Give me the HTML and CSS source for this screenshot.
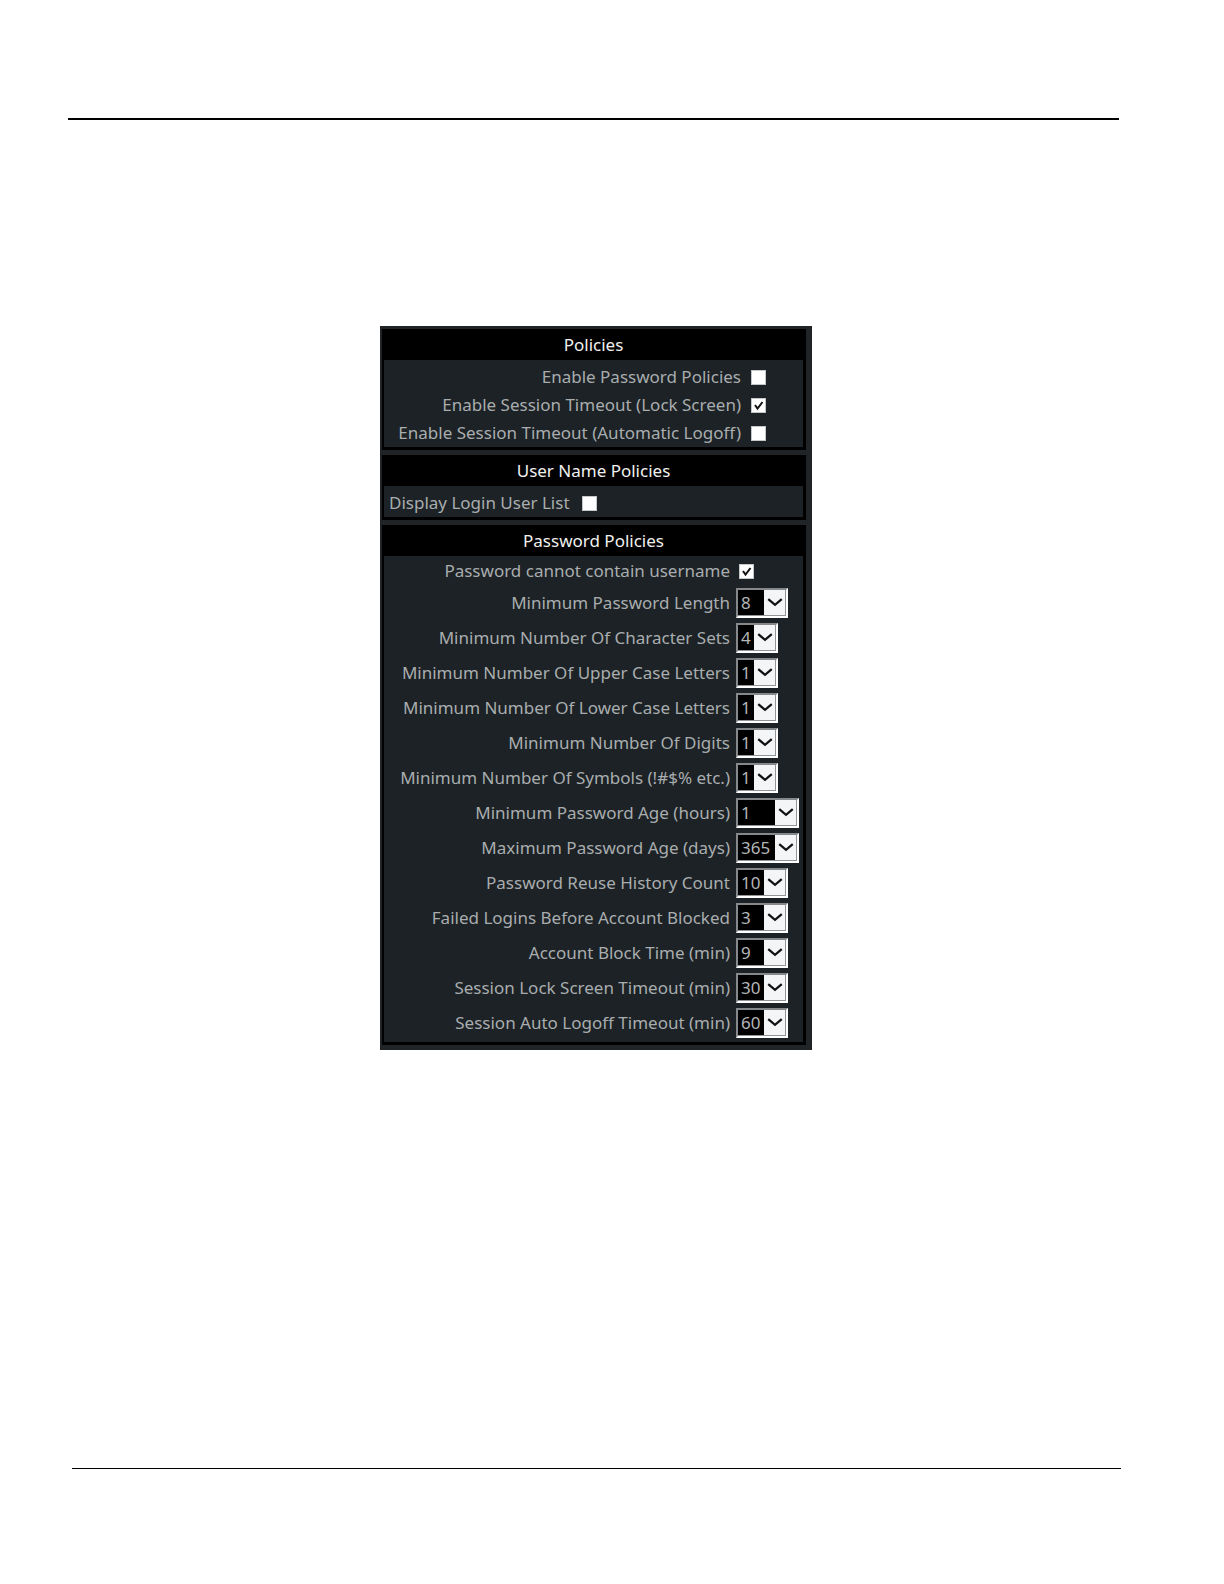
FILE: index.html
```
<!DOCTYPE html>
<html lang="en">
<head>
<meta charset="utf-8">
<title>Policies</title>
<link rel="stylesheet" href="styles.css">
</head>
<body>
<header class="page-header"></header>
<main class="page-main">
<form class="panel">
  <section class="group">
    <h2 class="group-title">Policies</h2>
    <div class="group-body session">
      <div class="row"><label for="pp">Enable Password Policies</label><input class="check" type="checkbox" id="pp"></div>
      <div class="row"><label for="ls">Enable Session Timeout (Lock Screen)</label><input class="check" type="checkbox" id="ls" checked></div>
      <div class="row"><label for="al">Enable Session Timeout (Automatic Logoff)</label><input class="check" type="checkbox" id="al"></div>
    </div>
  </section>
  <section class="group">
    <h2 class="group-title">User Name Policies</h2>
    <div class="group-body users">
      <div class="row"><label for="ul">Display Login User List</label><input class="check" type="checkbox" id="ul"></div>
    </div>
  </section>
  <section class="group">
    <h2 class="group-title">Password Policies</h2>
    <div class="group-body password">
      <div class="row"><label for="cu">Password cannot contain username</label><input class="check" type="checkbox" id="cu" checked></div>
      <div class="row tall"><label for="s1">Minimum Password Length</label><span class="drop medium"><select id="s1"><option>8</option></select><svg viewBox="0 0 14 8"><path d="M1 1l6 5 6-5"/></svg></span></div>
      <div class="row tall"><label for="s2">Minimum Number Of Character Sets</label><span class="drop"><select id="s2"><option>4</option></select><svg viewBox="0 0 14 8"><path d="M1 1l6 5 6-5"/></svg></span></div>
      <div class="row tall"><label for="s3">Minimum Number Of Upper Case Letters</label><span class="drop"><select id="s3"><option>1</option></select><svg viewBox="0 0 14 8"><path d="M1 1l6 5 6-5"/></svg></span></div>
      <div class="row tall"><label for="s4">Minimum Number Of Lower Case Letters</label><span class="drop"><select id="s4"><option>1</option></select><svg viewBox="0 0 14 8"><path d="M1 1l6 5 6-5"/></svg></span></div>
      <div class="row tall"><label for="s5">Minimum Number Of Digits</label><span class="drop"><select id="s5"><option>1</option></select><svg viewBox="0 0 14 8"><path d="M1 1l6 5 6-5"/></svg></span></div>
      <div class="row tall"><label for="s6">Minimum Number Of Symbols (!#$% etc.)</label><span class="drop"><select id="s6"><option>1</option></select><svg viewBox="0 0 14 8"><path d="M1 1l6 5 6-5"/></svg></span></div>
      <div class="row tall"><label for="s7">Minimum Password Age (hours)</label><span class="drop wide"><select id="s7"><option>1</option></select><svg viewBox="0 0 14 8"><path d="M1 1l6 5 6-5"/></svg></span></div>
      <div class="row tall"><label for="s8">Maximum Password Age (days)</label><span class="drop wide"><select id="s8"><option>365</option></select><svg viewBox="0 0 14 8"><path d="M1 1l6 5 6-5"/></svg></span></div>
      <div class="row tall"><label for="s9">Password Reuse History Count</label><span class="drop medium"><select id="s9"><option>10</option></select><svg viewBox="0 0 14 8"><path d="M1 1l6 5 6-5"/></svg></span></div>
      <div class="row tall"><label for="s10">Failed Logins Before Account Blocked</label><span class="drop medium"><select id="s10"><option>3</option></select><svg viewBox="0 0 14 8"><path d="M1 1l6 5 6-5"/></svg></span></div>
      <div class="row tall"><label for="s11">Account Block Time (min)</label><span class="drop medium"><select id="s11"><option>9</option></select><svg viewBox="0 0 14 8"><path d="M1 1l6 5 6-5"/></svg></span></div>
      <div class="row tall"><label for="s12">Session Lock Screen Timeout (min)</label><span class="drop medium"><select id="s12"><option>30</option></select><svg viewBox="0 0 14 8"><path d="M1 1l6 5 6-5"/></svg></span></div>
      <div class="row tall"><label for="s13">Session Auto Logoff Timeout (min)</label><span class="drop medium"><select id="s13"><option>60</option></select><svg viewBox="0 0 14 8"><path d="M1 1l6 5 6-5"/></svg></span></div>
    </div>
  </section>
</form>
</main>
<footer class="page-footer"></footer>
</body>
</html>
```
FILE: styles.css
```
* { box-sizing: border-box; }

body {
  margin: 0;
  min-height: 100vh;
  display: flex;
  flex-direction: column;
  background: #fff;
  color: #a9adaf;
  font: 17px/24px "Noto Sans", sans-serif;
}

.page-header {
  margin: 118px 105px 0 68px;
  border-top: 2px solid #000;
}

.page-main {
  flex: 1;
  padding: 206px 104px 60px 72px;
}

.page-footer {
  margin: 0 103px 115px 72px;
  border-top: 1px solid #000;
}

.panel {
  max-width: 432px;
  margin: 0 auto;
  padding: 3px 6px 5px 2px;
  display: flex;
  flex-direction: column;
  gap: 5px;
  background: #202426;
}

.group {
  border: 3px solid #000;
  border-left-width: 2px;
  background: #1c2225;
}

.group-title {
  margin: 0;
  height: 28px;
  background: #000;
  color: #f0f0ee;
  font-size: 17px;
  font-weight: 400;
  line-height: 26px;
  text-align: center;
}

.group-body { padding: 3px 0 0 5px; }
.group-body.password { padding: 1px 0 2px 5px; }

.row {
  display: grid;
  align-items: center;
  height: 28px;
  white-space: nowrap;
}

.row label { text-align: right; }

.session .row { grid-template-columns: 352px auto; column-gap: 10px; }
.users .row { grid-template-columns: max-content auto; column-gap: 12px; }
.password .row { grid-template-columns: 341px auto; column-gap: 6px; }
.password .check { margin-left: 3px; }
.password .tall { height: 35px; }

.check {
  appearance: none;
  width: 15px;
  height: 15px;
  margin: 0;
  border: 1px solid #c4c7c8;
  background: #fff;
}

.check:checked {
  background: #fff url("data:image/svg+xml,%3Csvg xmlns='http://www.w3.org/2000/svg' viewBox='0 0 13 13'%3E%3Cpath d='M3 6l2.500 3.500L10.500 3' fill='none' stroke='%23111' stroke-width='2'/%3E%3C/svg%3E") center / 13px 13px;
}

.drop {
  position: relative;
  display: block;
  width: 42px;
  height: 30px;
}

.drop.medium { width: 52px; }
.drop.wide { width: 63px; }

.drop select {
  appearance: none;
  display: block;
  width: 100%;
  height: 100%;
  margin: 0;
  padding: 0 0 0 3px;
  border: 2px solid;
  border-color: #85898b #fff #fff #85898b;
  border-radius: 0;
  background: linear-gradient(#f4f5f6, #f4f5f6) right / 22px 100% no-repeat #000;
  box-shadow: inset -1px -1px #929597;
  color: #b4b6b7;
  font: inherit;
}

.drop svg {
  position: absolute;
  right: 5px;
  top: 10px;
  width: 16px;
  height: 9px;
  fill: none;
  stroke: #111;
  stroke-width: 2;
  pointer-events: none;
}
```
